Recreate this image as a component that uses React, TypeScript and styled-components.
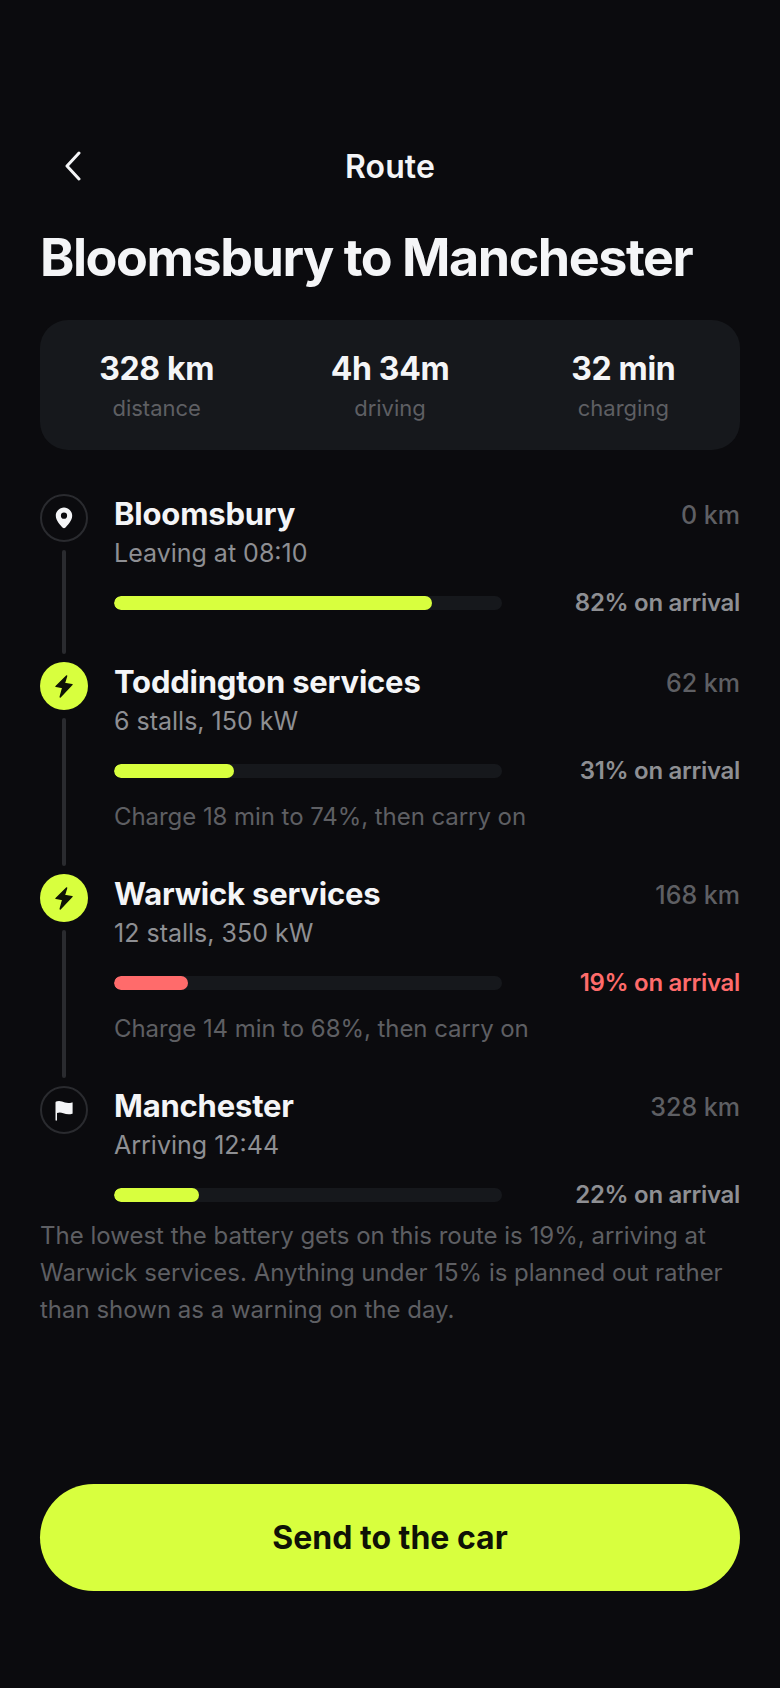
import React from 'react';
import styled, { createGlobalStyle } from 'styled-components';

const GlobalStyle = createGlobalStyle`
  html, body {
    margin: 0;
    padding: 0;
    background: #0b0b0e;
  }
  * {
    box-sizing: border-box;
  }
`;

type StopKind = 'start' | 'charge' | 'end';

interface Stop {
  kind: StopKind;
  name: string;
  detail: string;
  distance: string;
  battery: number;
  low?: boolean;
  note?: string;
}

const stats = [
  { value: '328 km', label: 'distance' },
  { value: '4h 34m', label: 'driving' },
  { value: '32 min', label: 'charging' },
];

const stops: Stop[] = [
  { kind: 'start', name: 'Bloomsbury', detail: 'Leaving at 08:10', distance: '0 km', battery: 82 },
  {
    kind: 'charge',
    name: 'Toddington services',
    detail: '6 stalls, 150 kW',
    distance: '62 km',
    battery: 31,
    note: 'Charge 18 min to 74%, then carry on',
  },
  {
    kind: 'charge',
    name: 'Warwick services',
    detail: '12 stalls, 350 kW',
    distance: '168 km',
    battery: 19,
    low: true,
    note: 'Charge 14 min to 68%, then carry on',
  },
  { kind: 'end', name: 'Manchester', detail: 'Arriving 12:44', distance: '328 km', battery: 22 },
];

function StopIcon({ kind }: { kind: StopKind }) {
  if (kind === 'start') {
    return (
      <svg width="18" height="22" viewBox="0 0 18 22">
        <path
          fillRule="evenodd"
          fill="#f4f5f7"
          d="M9 .6C4.500.6 .8 4.200.8 8.700c0 5 5.300 10.300 7 12 .7.600 1.700.600 2.400 0 1.700-1.700 7-7 7-12C17.200 4.200 13.500.6 9 .6Zm0 5a3.100 3.100 0 1 1 0 6.200 3.100 3.100 0 0 1 0-6.200Z"
        />
      </svg>
    );
  }
  if (kind === 'charge') {
    return (
      <svg width="18" height="23" viewBox="0 0 18 23">
        <path
          fill="#0f1206"
          stroke="#0f1206"
          strokeWidth="1.4"
          strokeLinejoin="round"
          d="M11.600 1 1 11.400l6.800 1.100L5.200 22l11.800-12.400-7.600-1.200L11.600 1Z"
        />
      </svg>
    );
  }
  return (
    <svg width="20" height="21" viewBox="0 0 20 21">
      <path
        fill="#f4f5f7"
        d="M1.300 1.800C3.500.8 5.700.6 8 1.500c2.900 1.200 6 2 10 .9.300-.1.600.1.600.5v10.300c0 .3-.1.500-.4.600-3 1-6.100.6-8.900-.6-2.300-1-4.400-1.100-6.300-.2V20c0 .4-.3.800-.8.800s-.7-.4-.7-.8V2.500c0-.3.200-.6.800-.7Z"
      />
    </svg>
  );
}

function BackIcon() {
  return (
    <svg width="20" height="30" viewBox="0 0 20 30" fill="none">
      <path d="M16 2 4 15l12 13" stroke="#f4f5f7" strokeWidth="3" strokeLinecap="round" strokeLinejoin="round" />
    </svg>
  );
}

export default function App() {
  return (
    <>
      <GlobalStyle />
      <Screen>
        <TopBar>
          <BackButton aria-label="Back">
            <BackIcon />
          </BackButton>
          <TopTitle>Route</TopTitle>
        </TopBar>

        <Heading>Bloomsbury to Manchester</Heading>

        <StatsCard>
          {stats.map((stat) => (
            <Stat key={stat.label}>
              <StatValue>{stat.value}</StatValue>
              <StatLabel>{stat.label}</StatLabel>
            </Stat>
          ))}
        </StatsCard>

        <Timeline>
          {stops.map((stop, index) => (
            <StopRow key={stop.name}>
              <Rail>
                <Node $kind={stop.kind}>
                  <StopIcon kind={stop.kind} />
                </Node>
                {index < stops.length - 1 && <Connector />}
              </Rail>
              <StopBody $last={index === stops.length - 1}>
                <NameRow>
                  <StopName>{stop.name}</StopName>
                  <Distance>{stop.distance}</Distance>
                </NameRow>
                <Detail>{stop.detail}</Detail>
                <BatteryRow>
                  <Track>
                    <Fill $low={stop.low} style={{ width: `${stop.battery}%` }} />
                  </Track>
                  <Arrival $low={stop.low}>{stop.battery}% on arrival</Arrival>
                </BatteryRow>
                {stop.note && <Note>{stop.note}</Note>}
              </StopBody>
            </StopRow>
          ))}
        </Timeline>

        <Footnote>
          The lowest the battery gets on this route is 19%, arriving at Warwick services. Anything under 15% is planned
          out rather than shown as a warning on the day.
        </Footnote>

        <SendButton>Send to the car</SendButton>
      </Screen>
    </>
  );
}

const Screen = styled.div`
  display: flex;
  flex-direction: column;
  width: 780px;
  height: 1688px;
  padding: 136px 40px 97px;
  background: #0b0b0e;
  color: #f4f5f7;
  font-family: Inter, 'Liberation Sans', sans-serif;
  overflow: hidden;
`;

const TopBar = styled.div`
  position: relative;
  display: flex;
  align-items: center;
  justify-content: center;
  height: 60px;
`;

const BackButton = styled.button`
  position: absolute;
  left: 23px;
  top: 15px;
  display: flex;
  padding: 0;
  border: 0;
  background: none;
`;

const TopTitle = styled.div`
  font-size: 32px;
  font-weight: 600;
  letter-spacing: 0.1px;
`;

const Heading = styled.h1`
  margin: 30px 0 0;
  font-size: 52px;
  line-height: 64px;
  font-weight: 700;
  letter-spacing: -1.45px;
  white-space: nowrap;
`;

const StatsCard = styled.div`
  display: grid;
  grid-template-columns: repeat(3, 1fr);
  align-items: center;
  height: 130px;
  margin-top: 30px;
  padding-top: 3px;
  border-radius: 28px;
  background: #16181c;
`;

const Stat = styled.div`
  display: flex;
  flex-direction: column;
  align-items: center;
`;

const StatValue = styled.div`
  font-size: 32px;
  line-height: 40px;
  font-weight: 700;
  letter-spacing: -0.32px;
`;

const StatLabel = styled.div`
  margin-top: 3px;
  font-size: 22px;
  line-height: 32px;
  color: #5e5f63;
`;

const Timeline = styled.div`
  display: flex;
  flex-direction: column;
  margin-top: 44px;
`;

const StopRow = styled.div`
  display: flex;
  gap: 26px;
`;

const Rail = styled.div`
  display: flex;
  flex-direction: column;
  align-items: center;
  flex: 0 0 48px;
`;

const Node = styled.div<{ $kind: StopKind }>`
  display: flex;
  align-items: center;
  justify-content: center;
  flex: 0 0 48px;
  width: 48px;
  height: 48px;
  border-radius: 50%;
  background: ${(p) => (p.$kind === 'charge' ? '#d8ff3e' : 'transparent')};
  border: ${(p) => (p.$kind === 'charge' ? '0' : '2px solid #2a2b2f')};
`;

const Connector = styled.div`
  flex: 1;
  width: 4px;
  margin: 8px 0;
  background: #2a2b2f;
  border-radius: 2px;
`;

const StopBody = styled.div<{ $last: boolean }>`
  flex: 1;
  min-width: 0;
  padding-bottom: ${(p) => (p.$last ? '0' : '39px')};
`;

const NameRow = styled.div`
  display: flex;
  align-items: flex-start;
  justify-content: space-between;
  height: 40px;
`;

const StopName = styled.div`
  font-size: 31px;
  line-height: 40px;
  font-weight: 700;
  letter-spacing: -0.2px;
  color: #f4f5f7;
`;

const Distance = styled.div`
  padding-top: 1px;
  font-size: 25px;
  line-height: 40px;
  font-weight: 500;
  color: #5e5f63;
`;

const Detail = styled.div`
  font-size: 25px;
  line-height: 38px;
  color: #8e8f93;
`;

const BatteryRow = styled.div`
  display: flex;
  align-items: center;
  justify-content: space-between;
  margin-top: 11px;
  height: 40px;
`;

const Track = styled.div`
  width: 388px;
  height: 14px;
  border-radius: 7px;
  background: #16181c;
  overflow: hidden;
`;

const Fill = styled.div<{ $low?: boolean }>`
  height: 100%;
  border-radius: 7px;
  background: ${(p) => (p.$low ? '#ff6b6b' : '#d8ff3e')};
`;

const Arrival = styled.div<{ $low?: boolean }>`
  font-size: 24px;
  line-height: 40px;
  font-weight: 600;
  letter-spacing: -0.3px;
  color: ${(p) => (p.$low ? '#ff6b6b' : '#8e8f93')};
`;

const Note = styled.div`
  margin-top: 8px;
  font-size: 24px;
  line-height: 36px;
  letter-spacing: -0.06px;
  color: #5e5f63;
`;

const Footnote = styled.p`
  margin: 2px 0 0;
  font-size: 24px;
  line-height: 37px;
  color: #5e5f63;
`;

const SendButton = styled.button`
  margin-top: auto;
  height: 107px;
  flex: 0 0 107px;
  border: 0;
  border-radius: 54px;
  background: #d8ff3e;
  color: #0f1206;
  font-family: inherit;
  font-size: 32px;
  font-weight: 700;
`;
